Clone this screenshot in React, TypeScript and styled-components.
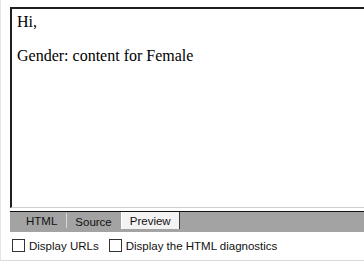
import React from 'react';
import styled, { createGlobalStyle } from 'styled-components';

const GlobalStyle = createGlobalStyle`
  html, body {
    margin: 0;
    padding: 0;
    background: #ffffff;
    overflow: hidden;
  }
`;

const Frame = styled.div`
  width: 364px;
  height: 274px;
  background: #ffffff;
  overflow: hidden;
`;

const Panel = styled.div`
  height: 261px;
  box-sizing: border-box;
  border-left: 1px solid #e3e3e3;
  border-bottom: 1px solid #dadada;
  padding: 7px 0 0 9px;
  display: flex;
  flex-direction: column;
`;

const Editor = styled.div`
  width: 360px;
  height: 201px;
  box-sizing: border-box;
  border-top: 2px solid #1f1f1f;
  border-left: 2px solid #1f1f1f;
  border-bottom: 1px solid #cfcfcf;
  padding: 4px 0 0 5px;
  background: #ffffff;
  font-family: "Liberation Serif", "Times New Roman", serif;
  font-size: 16px;
  line-height: 18px;
  color: #000;
`;

const Para = styled.p`
  margin: 0 0 16px 0;
`;

const TabBar = styled.div`
  margin-top: 3px;
  width: 360px;
  height: 21px;
  box-sizing: border-box;
  border-top: 1px solid #111111;
  background: #a3a3a3;
  display: flex;
  align-items: flex-start;
  padding-left: 7px;
  font-family: "Liberation Sans", Arial, sans-serif;
  font-size: 11.5px;
`;

const Tab = styled.div<{ $active?: boolean; $sep?: boolean }>`
  height: ${p => (p.$active ? '17px' : '18px')};
  box-sizing: border-box;
  padding: 0 8px;
  display: flex;
  align-items: center;
  color: #111;
  background: ${p => (p.$active ? '#f3f3f3' : 'transparent')};
  border-right: ${p =>
    p.$active ? '1px solid #3a3a3a' : p.$sep ? '1px solid #d8d8d8' : '1px solid transparent'};
  border-left: ${p => (p.$active ? '1px solid #ffffff' : '0')};
  margin-top: ${p => (p.$active ? '0' : '1px')};
  ${p => (p.$sep ? 'height: 15px; padding: 0 9px 0 9px;' : '')}
`;

const Options = styled.div`
  display: flex;
  align-items: center;
  gap: 10px;
  margin-top: 7px;
  padding-left: 2px;
  font-family: "Liberation Sans", Arial, sans-serif;
  font-size: 11.5px;
  color: #111;
`;

const Option = styled.label`
  display: flex;
  align-items: center;
  gap: 4px;
`;

const Box = styled.span`
  width: 13px;
  height: 13px;
  box-sizing: border-box;
  border: 1px solid #333333;
  background: #ffffff;
  display: inline-block;
`;

export default function App() {
  return (
    <>
      <GlobalStyle />
      <Frame>
        <Panel>
          <Editor>
            <Para>Hi,</Para>
            <Para>Gender: content for Female</Para>
          </Editor>
          <TabBar>
            <Tab $sep>HTML</Tab>
            <Tab>Source</Tab>
            <Tab $active>Preview</Tab>
          </TabBar>
          <Options>
            <Option><Box />Display URLs</Option>
            <Option><Box />Display the HTML diagnostics</Option>
          </Options>
        </Panel>
      </Frame>
    </>
  );
}
